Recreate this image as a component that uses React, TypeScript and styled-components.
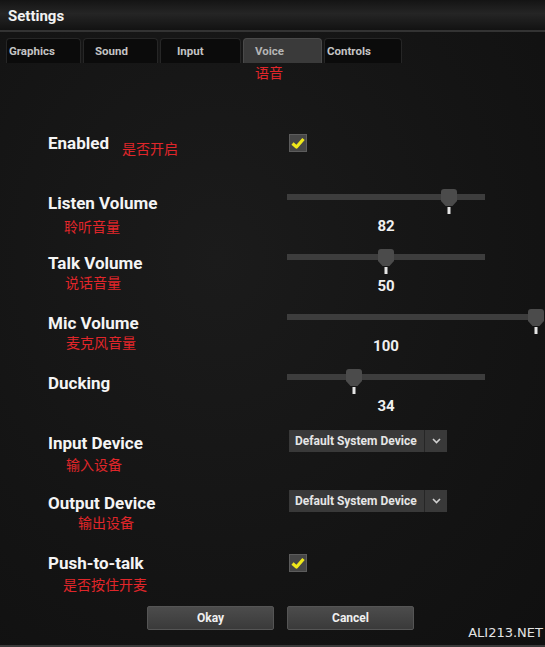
import React from 'react';
import styled, { createGlobalStyle } from 'styled-components';

const Global = createGlobalStyle`
  html, body {
    margin: 0;
    padding: 0;
    background: #141414;
  }
  * {
    box-sizing: border-box;
  }
`;

const Page = styled.div`
  position: relative;
  width: 545px;
  height: 647px;
  overflow: hidden;
  background: radial-gradient(ellipse at 40% 40%, #1b1b1b 0%, #141414 60%, #101010 100%);
  border-bottom: 2px solid #3a3a3a;
  font-family: Roboto, "Noto Sans", sans-serif;
`;

const TitleBar = styled.div`
  height: 32px;
  padding: 6px 0 0 8px;
  background: linear-gradient(#141414 0%, #252525 45%, #121212 100%);
  border-bottom: 2px solid #333;
  color: #f2f2f2;
  font-size: 15px;
  font-weight: 700;
  line-height: 20px;
`;

const TabBar = styled.div`
  display: flex;
  gap: 2px;
  height: 25px;
  margin-top: 6px;
  padding-left: 6px;
`;

const Tab = styled.div<{ $w: number; $pad: number; $active?: boolean }>`
  width: ${p => p.$w}px;
  padding: 5px 0 0 ${p => p.$pad}px;
  border: 1px solid ${p => (p.$active ? '#4a4a4a' : '#262626')};
  border-bottom: none;
  border-radius: 4px 4px 0 0;
  background: ${p => (p.$active ? '#3a3a3a' : '#0b0b0b')};
  color: ${p => (p.$active ? '#b5b5b5' : '#c4c4c4')};
  font-size: 11.5px;
  font-weight: 700;
  line-height: 14px;
`;

const Note = styled.div<{ $indent?: number; $top?: number }>`
  margin-left: ${p => p.$indent ?? 0}px;
  margin-top: ${p => p.$top ?? 0}px;
  color: #e0262a;
  font-family: "Noto Sans CJK SC", sans-serif;
  font-size: 14px;
  line-height: 18px;
  white-space: nowrap;
`;

const Form = styled.div`
  display: flex;
  flex-direction: column;
  gap: 7px;
  margin-top: 52px;
  padding-left: 48px;
`;

const Row = styled.div`
  display: grid;
  grid-template-columns: 239px 1fr;
  height: 53px;
`;

const LabelCol = styled.div<{ $inline?: boolean }>`
  display: flex;
  flex-direction: ${p => (p.$inline ? 'row' : 'column')};
`;

const Label = styled.div`
  color: #f4f4f4;
  font-size: 17px;
  font-weight: 700;
  line-height: 20px;
  white-space: nowrap;
`;

const Control = styled.div`
  position: relative;
`;

const CheckBox = styled.div`
  width: 18px;
  height: 18px;
  margin: 1px 0 0 2px;
  border: 1px solid #5c5c5c;
  background: #464646;
  display: flex;
  align-items: center;
  justify-content: center;
`;

const SliderWrap = styled.div`
  position: relative;
  padding-top: 1px;
`;

const Track = styled.div<{ $w: number }>`
  width: ${p => p.$w}px;
  height: 6px;
  background: #3d3d3d;
`;

const Handle = styled.svg`
  position: absolute;
  top: -4px;
  width: 18px;
  height: 27px;
  margin-left: -9px;
`;

const Value = styled.div`
  width: 198px;
  margin-top: 17px;
  color: #f0f0f0;
  font-size: 15px;
  font-weight: 700;
  line-height: 18px;
  text-align: center;
`;

const Select = styled.div`
  display: flex;
  width: 158px;
  height: 22px;
  margin: -3px 0 0 2px;
  background: #393939;
`;

const SelectText = styled.div`
  flex: 1;
  padding-left: 6px;
  border-right: 1px solid #262626;
  color: #e6e6e6;
  font-size: 12px;
  font-weight: 700;
  line-height: 22px;
  white-space: nowrap;
`;

const SelectArrow = styled.div`
  width: 22px;
  display: flex;
  align-items: center;
  justify-content: center;
`;

const ButtonRow = styled.div`
  display: flex;
  gap: 13px;
  padding-left: 147px;
`;

const Button = styled.div`
  width: 127px;
  height: 24px;
  border: 1px solid #555;
  border-radius: 2px;
  background: linear-gradient(#4c4c4c, #3a3a3a);
  color: #f0f0f0;
  font-size: 12px;
  font-weight: 700;
  line-height: 22px;
  text-align: center;
`;

const Watermark = styled.div`
  position: absolute;
  right: 2px;
  bottom: 4px;
  color: #e4e4e4;
  font-family: "DejaVu Sans", sans-serif;
  font-size: 13px;
  line-height: 16px;
`;

const Check = () => (
  <svg width="14" height="12" viewBox="0 0 14 12">
    <path d="M1.5 6.5 L5.5 10 L12.5 2" fill="none" stroke="#efe81a" strokeWidth="3.2" strokeLinejoin="round" />
  </svg>
);

const Slider: React.FC<{ value: number; trackWidth?: number }> = ({ value, trackWidth = 198 }) => (
  <SliderWrap>
    <Track $w={trackWidth} />
    <Handle style={{ left: (value / 100) * trackWidth }} viewBox="0 0 18 27">
      <path d="M1 3 Q1 0 4 0 H14 Q17 0 17 3 V12 L12.5 17 H5.5 L1 12 Z" fill="#4b4b4b" />
      <rect x="7.5" y="18" width="3" height="7" fill="#e4e4e4" />
    </Handle>
    <Value>{value}</Value>
  </SliderWrap>
);

const Dropdown = () => (
  <Select>
    <SelectText>Default System Device</SelectText>
    <SelectArrow>
      <svg width="9" height="6" viewBox="0 0 9 6">
        <path d="M1 1 L4.5 4.5 L8 1" fill="none" stroke="#cfcfcf" strokeWidth="1.6" />
      </svg>
    </SelectArrow>
  </Select>
);

const tabs = [
  { name: 'Graphics', w: 75, pad: 2 },
  { name: 'Sound', w: 75, pad: 11 },
  { name: 'Input', w: 81, pad: 16 },
  { name: 'Voice', w: 79, pad: 11, active: true },
  { name: 'Controls', w: 78, pad: 2 },
];

const App: React.FC = () => {
  return (
    <Page>
      <Global />
      <TitleBar>Settings</TitleBar>
      <TabBar>
        {tabs.map(t => (
          <Tab key={t.name} $w={t.w} $pad={t.pad} $active={t.active}>
            {t.name}
          </Tab>
        ))}
      </TabBar>
      <Note $indent={255} $top={0}>语音</Note>
      <Form>
        <Row>
          <LabelCol $inline>
            <Label>Enabled</Label>
            <Note $indent={13} $top={6}>是否开启</Note>
          </LabelCol>
          <Control>
            <CheckBox><Check /></CheckBox>
          </Control>
        </Row>
        <Row>
          <LabelCol>
            <Label>Listen Volume</Label>
            <Note $indent={16} $top={4}>聆听音量</Note>
          </LabelCol>
          <Control><Slider value={82} /></Control>
        </Row>
        <Row>
          <LabelCol>
            <Label>Talk Volume</Label>
            <Note $indent={17}>说话音量</Note>
          </LabelCol>
          <Control><Slider value={50} /></Control>
        </Row>
        <Row>
          <LabelCol>
            <Label>Mic Volume</Label>
            <Note $indent={18}>麦克风音量</Note>
          </LabelCol>
          <Control><Slider value={100} trackWidth={249} /></Control>
        </Row>
        <Row>
          <LabelCol>
            <Label>Ducking</Label>
          </LabelCol>
          <Control><Slider value={34} /></Control>
        </Row>
        <Row>
          <LabelCol>
            <Label>Input Device</Label>
            <Note $indent={18} $top={2}>输入设备</Note>
          </LabelCol>
          <Control><Dropdown /></Control>
        </Row>
        <Row>
          <LabelCol>
            <Label>Output Device</Label>
            <Note $indent={30}>输出设备</Note>
          </LabelCol>
          <Control><Dropdown /></Control>
        </Row>
        <Row>
          <LabelCol>
            <Label>Push-to-talk</Label>
            <Note $indent={15} $top={2}>是否按住开麦</Note>
          </LabelCol>
          <Control>
            <CheckBox><Check /></CheckBox>
          </Control>
        </Row>
      </Form>
      <ButtonRow>
        <Button>Okay</Button>
        <Button>Cancel</Button>
      </ButtonRow>
      <Watermark>ALI213.NET</Watermark>
    </Page>
  );
};

export default App;
